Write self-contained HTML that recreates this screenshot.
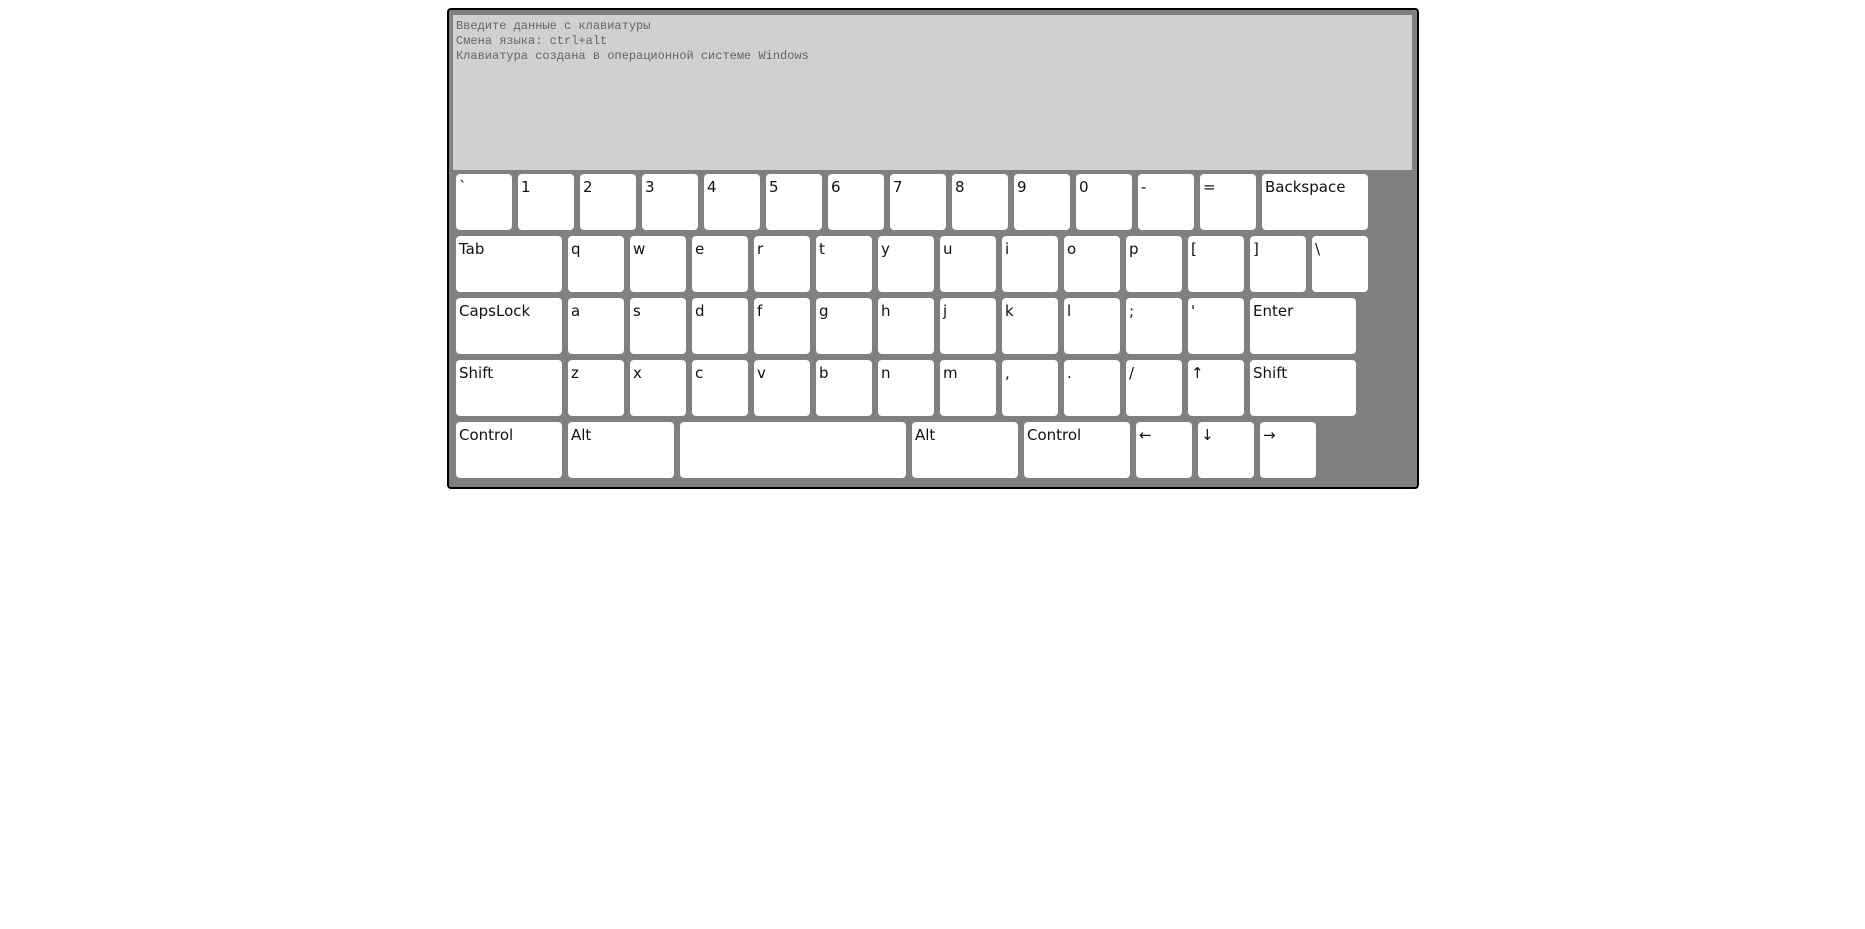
<!DOCTYPE html>
<html><head><meta charset="utf-8"><style>
body{margin:0;background:#fff;width:1865px;height:929px;position:relative;overflow:hidden}
#kb{position:absolute;left:447px;top:8px;width:968px;height:477px;background:#808080;border:2px solid #000;border-radius:4px}
#ta{position:absolute;left:4px;top:5px;width:959px;height:155px;background:#d0d0d0;font:12px "Liberation Mono","DejaVu Sans Mono",monospace;color:#666;line-height:15px;padding:4px 3px;box-sizing:border-box;white-space:pre}
.k{position:absolute;width:56px;height:56px;background:#fff;border-radius:4px;font:15px "DejaVu Sans","Liberation Sans",sans-serif;color:#111;padding:4px 3px 0;box-sizing:border-box;line-height:18px}
</style></head><body>
<div id="kb"><div id="ta">Введите данные с клавиатуры
Смена языка: ctrl+alt
Клавиатура создана в операционной системе Windows</div></div>
<div id="keys"></div>
<script>
const rows=[
[["`",1],["1",1],["2",1],["3",1],["4",1],["5",1],["6",1],["7",1],["8",1],["9",1],["0",1],["-",1],["=",1],["Backspace",106]],
[["Tab",106],["q",1],["w",1],["e",1],["r",1],["t",1],["y",1],["u",1],["i",1],["o",1],["p",1],["[",1],["]",1],["\\",1]],
[["CapsLock",106],["a",1],["s",1],["d",1],["f",1],["g",1],["h",1],["j",1],["k",1],["l",1],[";",1],["'",1],["Enter",106]],
[["Shift",106],["z",1],["x",1],["c",1],["v",1],["b",1],["n",1],["m",1],[",",1],[".",1],["/",1],["↑",1],["Shift",106]],
[["Control",106],["Alt",106],["",226],["Alt",106],["Control",106],["←",1],["↓",1],["→",1]]];
let h="";rows.forEach((r,i)=>{let x=456,y=174+i*62;r.forEach(([t,w])=>{w=w==1?56:w;h+=`<div class="k" style="left:${x}px;top:${y}px;width:${w}px">${t}</div>`;x+=w+6;});});
document.getElementById("keys").innerHTML=h;
</script>
</body></html>
